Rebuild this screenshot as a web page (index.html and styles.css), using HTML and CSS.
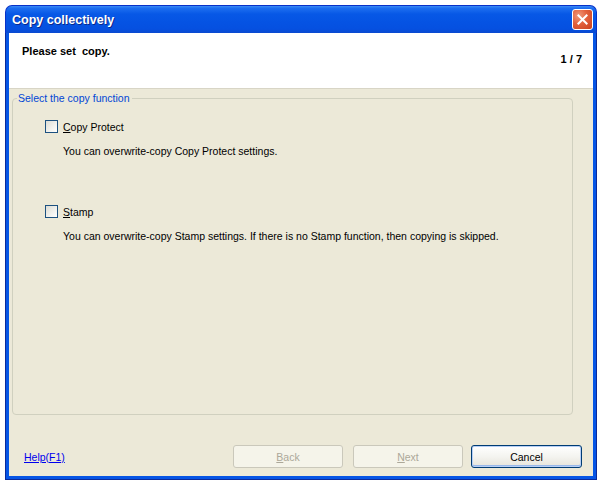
FILE: index.html
```
<!DOCTYPE html>
<html>
<head>
<meta charset="utf-8">
<link rel="stylesheet" href="styles.css">
</head>
<body>
<div class="window">
  <div class="titlebar">
    <span class="title">Copy collectively</span>
    <span class="close">
      <svg width="21" height="21" viewBox="0 0 21 21">
        <path d="M6 6 L15 15 M15 6 L6 15" stroke="#fff" stroke-width="2.2" stroke-linecap="square"/>
      </svg>
    </span>
  </div>
  <div class="frame">
    <div class="header">
      <span class="heading">Please set&nbsp; copy.</span>
      <span class="step">1 / 7</span>
    </div>
    <div class="content">
      <div class="group">
        <div class="legend">Select the copy function</div>
        <div class="option">
          <div class="check-row"><span class="checkbox"></span><span><u>C</u>opy Protect</span></div>
          <div class="desc">You can overwrite-copy Copy Protect settings.</div>
        </div>
        <div class="option second">
          <div class="check-row"><span class="checkbox"></span><span><u>S</u>tamp</span></div>
          <div class="desc">You can overwrite-copy Stamp settings. If there is no Stamp function, then copying is skipped.</div>
        </div>
      </div>
      <div class="footer">
        <a class="help">Help(F1)</a>
        <div class="buttons">
          <span class="btn disabled"><u>B</u>ack</span>
          <span class="btn disabled next"><u>N</u>ext</span>
          <span class="btn default">Cancel</span>
        </div>
      </div>
    </div>
  </div>
</div>
</body>
</html>
```
FILE: styles.css
```
* { box-sizing: border-box; }
html, body { margin: 0; padding: 0; background: #fff; }
body {
  font-family: "Liberation Sans", Arial, sans-serif;
  font-size: 10.5px;
  color: #000;
}
.window {
  margin: 5px 0 0 5px;
  width: 592px;
  height: 475px;
  display: flex;
  flex-direction: column;
}
.titlebar {
  height: 28px;
  border-radius: 7px 7px 0 0;
  background: linear-gradient(to bottom, #3C8CF6 0%, #1D6EF0 8%, #0758E6 30%, #0553E3 60%, #0550E0 85%, #0A4AD0 100%);
  border: 1px solid #0831C8;
  border-bottom: none;
  display: flex;
  align-items: center;
  justify-content: space-between;
  padding: 0 3px 0 6px;
}
.title {
  color: #fff;
  font-family: "Liberation Sans", Arial, sans-serif;
  font-weight: bold;
  font-size: 12.5px;
  text-shadow: 1px 1px 0 #0A2A8C;
}
.close {
  width: 21px;
  height: 21px;
  border: 1px solid #fff;
  border-radius: 3px;
  background: radial-gradient(circle at 30% 30%, #F09A7C 0%, #E2603C 45%, #C9401E 100%);
  display: flex;
  align-items: center;
  justify-content: center;
}
.close svg { display: block; }
.frame {
  flex: 1;
  display: flex;
  flex-direction: column;
  border: 4px solid #0555E5;
  border-top: none;
  position: relative;
}
.frame::after {
  content: "";
  position: absolute;
  left: -4px; right: -4px; bottom: -4px; top: 0;
  border: 1px solid #0A2A9A;
  border-top: none;
  pointer-events: none;
}
.header {
  height: 56px;
  background: #fff;
  border-bottom: 1px solid #D8D5C6;
  display: flex;
  justify-content: space-between;
  padding: 11px 11px 0 13px;
  font-weight: bold;
  font-size: 11px;
}
.heading { line-height: 14px; }
.step { line-height: 14px; margin-top: 8px; }
.content {
  flex: 1;
  background: #ECE9D8;
  display: flex;
  flex-direction: column;
  padding: 9px 20px 0 3px;
}
.group {
  height: 317px;
  border: 1px solid #D0D0BF;
  border-radius: 4px;
  position: relative;
  padding: 21px 0 0 32px;
}
.legend {
  position: absolute;
  top: -7px;
  left: 4px;
  background: #ECE9D8;
  color: #0046D5;
  padding: 0 2px 0 1px;
  line-height: 13px;
}
.option { display: flex; flex-direction: column; }
.option.second { margin-top: 47px; }
.check-row {
  display: flex;
  align-items: center;
  gap: 5px;
  height: 13px;
}
.checkbox {
  width: 13px;
  height: 13px;
  border: 1px solid #1C5180;
  background: linear-gradient(135deg, #DCDCD4 0%, #F2F2EE 60%, #FFFFFF 100%);
}
.desc {
  margin: 12px 0 0 18px;
  line-height: 13px;
}
.footer {
  display: flex;
  align-items: center;
  justify-content: space-between;
  margin-top: 30px;
  padding-left: 12px;
  margin-right: -9px;
}
.help {
  color: #0000EE;
  text-decoration: underline;
}
.buttons {
  display: flex;
}
.btn {
  width: 110px;
  height: 23px;
  border-radius: 3px;
  display: flex;
  align-items: center;
  justify-content: center;
}
.btn.next { margin-left: 10px; margin-right: 8px; }
.btn.disabled {
  border: 1px solid #CAC8BB;
  background: #F5F4EA;
  color: #ACA899;
}
.btn.default {
  border: 1px solid #003C74;
  background: linear-gradient(to bottom, #FFFFFF 0%, #F4F4F0 50%, #E6E4DA 100%);
  box-shadow: inset 0 0 0 1px #B7CFF5, inset 0 -1px 0 1px #98B8EA;
  width: 111px;
}
```
